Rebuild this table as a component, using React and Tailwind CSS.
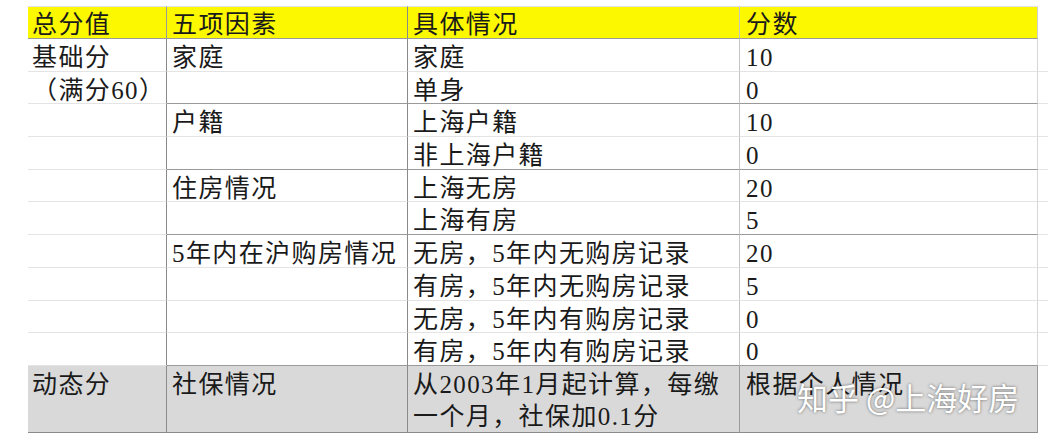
import React from 'react';

// rows of the scoring table; `end` marks the last row of a factor group
const rows = [
  { total: '基础分', factor: '家庭', detail: '家庭', score: '10' },
  { total: '（满分60）', factor: '', detail: '单身', score: '0', end: true },
  { total: '', factor: '户籍', detail: '上海户籍', score: '10' },
  { total: '', factor: '', detail: '非上海户籍', score: '0', end: true },
  { total: '', factor: '住房情况', detail: '上海无房', score: '20' },
  { total: '', factor: '', detail: '上海有房', score: '5', end: true },
  { total: '', factor: '5年内在沪购房情况', detail: '无房，5年内无购房记录', score: '20' },
  { total: '', factor: '', detail: '有房，5年内无购房记录', score: '5' },
  { total: '', factor: '', detail: '无房，5年内有购房记录', score: '0' },
  { total: '', factor: '', detail: '有房，5年内有购房记录', score: '0', end: true },
];

const font = "font-['Liberation_Serif','Noto_Sans_CJK_SC',serif]";

export default function App() {
  return (
    <div className={`relative w-[1048px] h-[441px] overflow-hidden bg-white text-[#1a1a1a] text-[25px] tracking-[1.4px] ${font}`}>
      <div className="pt-[6px] pl-[28px]">
        {/* header */}
        <div className="flex h-[33px] leading-[33px]">
          <div className="w-[139px] pl-[4px] pt-[1px] bg-[#fcf800] border-t border-b border-r border-t-[#e2e2e2] border-b-[#9a9a9a] border-r-[#9a9a9a]">总分值</div>
          <div className="w-[241px] pl-[5px] pt-[1px] bg-[#fcf800] border-t border-b border-r border-t-[#e2e2e2] border-b-[#9a9a9a] border-r-[#8a8a8a]">五项因素</div>
          <div className="w-[332px] pl-[5px] pt-[1px] bg-[#fcf800] border-t border-b border-r border-t-[#e2e2e2] border-b-[#9a9a9a] border-r-[#c4c4c4]">具体情况</div>
          <div className="w-[298px] pl-[6px] pt-[1px] bg-[#fcf800] border-t border-b border-r border-t-[#e2e2e2] border-b-[#9a9a9a] border-r-[#d0d0d0]">分数</div>
        </div>

        {rows.map((r, i) => (
          <div key={i} className="flex h-[32.7px] leading-[33px]">
            <div className="w-[139px] pl-[4px] pt-[2px] border-b border-r border-b-[#e4e4e4] border-r-[#8a8a8a] whitespace-nowrap">{r.total}</div>
            <div className={`w-[241px] pl-[5px] pt-[2px] border-b border-r border-r-[#8a8a8a] whitespace-nowrap ${r.end ? 'border-b-[#9a9a9a]' : 'border-b-[#e4e4e4]'}`}>{r.factor}</div>
            <div className={`w-[332px] pl-[5px] pt-[2px] border-b border-r border-r-[#c4c4c4] whitespace-nowrap ${r.end ? 'border-b-[#9a9a9a]' : 'border-b-[#e4e4e4]'}`}>{r.detail}</div>
            <div className={`w-[298px] pl-[6px] pt-[2px] border-b border-r border-r-[#d6d6d6] ${r.end ? 'border-b-[#9a9a9a]' : 'border-b-[#e4e4e4]'}`}>{r.score}</div>
            <div className="w-[10px] border-b border-b-[#e4e4e4]"></div>
          </div>
        ))}

        {/* dynamic score row */}
        <div className="flex h-[67px] leading-[32px]">
          <div className="w-[139px] pl-[4px] pt-[3px] bg-[#d9d9d9] border-b border-r border-b-[#8a8a8a] border-r-[#8a8a8a]">动态分</div>
          <div className="w-[241px] pl-[5px] pt-[3px] bg-[#d9d9d9] border-b border-r border-b-[#8a8a8a] border-r-[#8a8a8a]">社保情况</div>
          <div className="w-[332px] pl-[5px] pt-[3px] bg-[#d9d9d9] border-b border-r border-b-[#8a8a8a] border-r-[#9a9a9a] whitespace-nowrap">
            <div>从2003年1月起计算，每缴</div>
            <div>一个月，社保加0.1分</div>
          </div>
          <div className="w-[298px] pl-[6px] pt-[3px] bg-[#d9d9d9] border-b border-r border-b-[#8a8a8a] border-r-[#9a9a9a]">根据个人情况</div>
        </div>
      </div>

      {/* watermark */}
      <div className="absolute left-[797px] top-[377px] text-[31px] leading-[40px] tracking-normal text-white font-['Noto_Sans_CJK_SC',sans-serif] [text-shadow:0_0_3px_rgba(0,0,0,0.55)] whitespace-nowrap">
        知乎 @上海好房
      </div>
    </div>
  );
}
